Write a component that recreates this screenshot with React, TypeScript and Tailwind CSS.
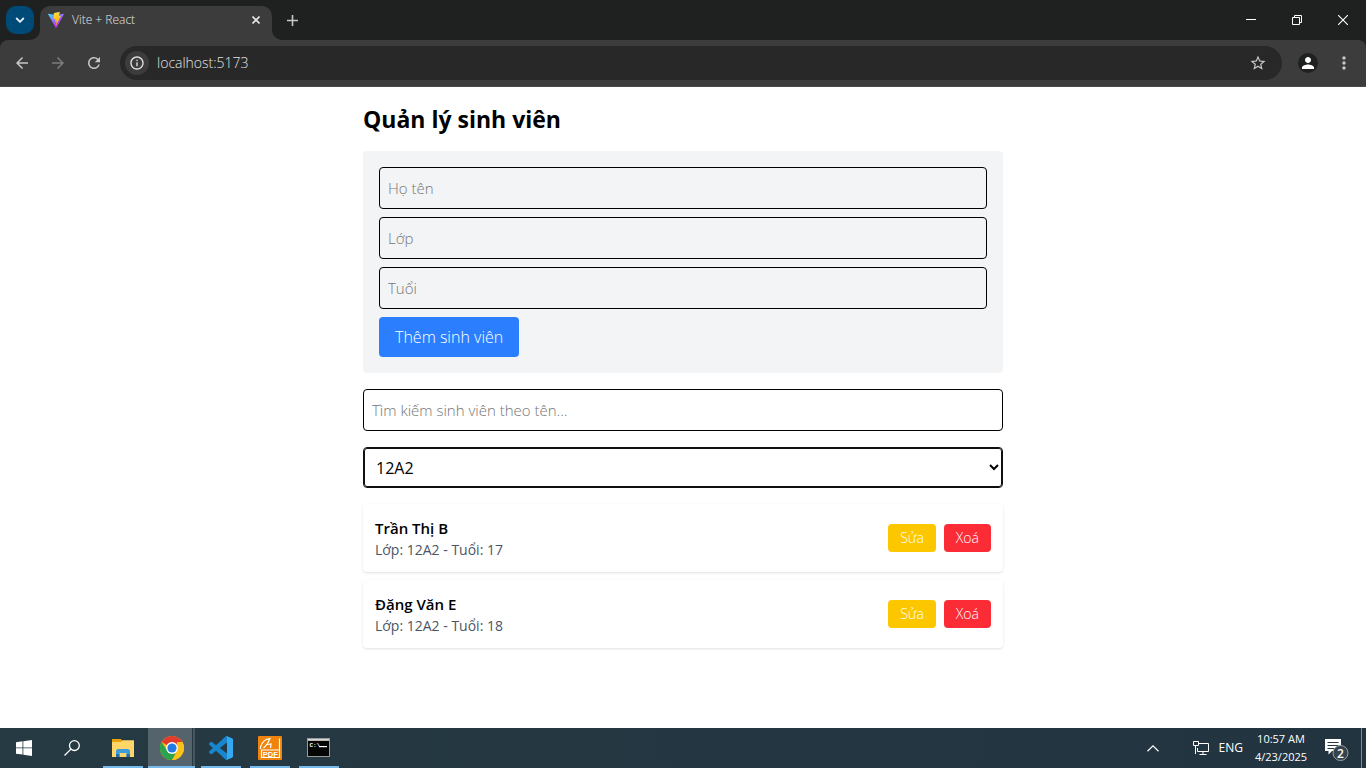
import React from "react";
import {
  MdArrowBack,
  MdArrowForward,
  MdInfoOutline,
  MdMoreVert,
  MdPerson,
  MdRefresh,
  MdStarOutline,
} from "react-icons/md";

type Student = { id: number; name: string; group: string; age: number };

const students: Student[] = [
  { id: 2, name: "Trần Thị B", group: "12A2", age: 17 },
  { id: 5, name: "Đặng Văn E", group: "12A2", age: 18 },
];

function ViteLogo() {
  return (
    <svg viewBox="0 0 256 257" className="size-4 shrink-0" aria-hidden="true">
      <defs>
        <linearGradient id="vite-a" x1="0%" x2="57.6%" y1="7.7%" y2="78.4%">
          <stop offset="0%" stopColor="#41D1FF" />
          <stop offset="100%" stopColor="#BD34FE" />
        </linearGradient>
        <linearGradient id="vite-b" x1="43.4%" x2="50.3%" y1="2.2%" y2="89%">
          <stop offset="0%" stopColor="#FFEA83" />
          <stop offset="8.3%" stopColor="#FFDD35" />
          <stop offset="100%" stopColor="#FFA800" />
        </linearGradient>
      </defs>
      <path fill="url(#vite-a)" d="M255.153 37.938L134.897 252.976c-2.483 4.44-8.862 4.466-11.382.048L.875 37.958c-2.746-4.814 1.371-10.646 6.827-9.67l120.385 21.517a6.537 6.537 0 0 0 2.322-.004l117.867-21.483c5.438-.991 9.574 4.796 6.877 9.62Z" />
      <path fill="url(#vite-b)" d="M185.432.063L96.44 17.501a3.268 3.268 0 0 0-2.634 3.014l-5.474 92.456a3.268 3.268 0 0 0 3.997 3.378l24.777-5.718c2.318-.535 4.413 1.507 3.936 3.838l-7.361 36.047c-.495 2.426 1.782 4.5 4.151 3.78l15.304-4.649c2.372-.72 4.652 1.36 4.15 3.788l-11.698 56.621c-.732 3.542 3.979 5.473 5.943 2.437l1.313-2.028l72.516-144.72c1.215-2.423-.88-5.186-3.54-4.672l-25.505 4.922c-2.396.462-4.435-1.77-3.759-4.114l16.646-57.705c.677-2.35-1.37-4.583-3.769-4.113Z" />
    </svg>
  );
}

function TabStrip() {
  return (
    <div className="flex h-10 bg-[#1f2120] text-[#e3e3e3]">
      <button aria-label="Search tabs" className="mt-1.5 ml-1.5 flex size-7 items-center justify-center rounded-[10px] bg-[#004a77]">
        <svg viewBox="0 0 10 6" className="h-[6px] w-[10px]" fill="none" stroke="#e8f2fa" strokeWidth="1.8">
          <path d="M1.2 1 5 4.8 8.8 1" />
        </svg>
      </button>
      <div className="flex items-end">
        <svg viewBox="0 0 10 10" className="-ml-1 size-[10px]" fill="#3c3c3c" aria-hidden="true">
          <path d="M10 0v10H0A10 10 0 0 0 10 0Z" />
        </svg>
      </div>
      <div className="mt-1.5 flex w-[232px] items-center gap-2 rounded-t-[10px] bg-[#3c3c3c] px-2 pb-1.5">
        <ViteLogo />
        <span className="flex-1 font-['Open_Sans','Noto_Sans',sans-serif] text-xs font-light">Vite + React</span>
        <button aria-label="Close tab" className="flex size-4 items-center justify-center">
          <svg viewBox="0 0 8 8" className="size-2" stroke="currentColor" strokeWidth="1.6">
            <path d="m.5.5 7 7M7.500.5l-7 7" />
          </svg>
        </button>
      </div>
      <div className="flex items-end">
        <svg viewBox="0 0 10 10" className="size-[10px]" fill="#3c3c3c" aria-hidden="true">
          <path d="M0 0v10h10A10 10 0 0 1 0 0Z" />
        </svg>
      </div>
      <button aria-label="New tab" className="flex w-5 items-center justify-center">
        <svg viewBox="0 0 11 11" className="size-[11px]" stroke="#c7c7c7" strokeWidth="1.6">
          <path d="M5.5 0v11M0 5.5h11" />
        </svg>
      </button>
      <div className="ml-auto flex text-white">
        <button aria-label="Minimize" className="flex w-[46px] items-center justify-center">
          <svg viewBox="0 0 10 10" className="size-[10px]" fill="none" stroke="currentColor">
            <path d="M0 4.5h10" />
          </svg>
        </button>
        <button aria-label="Restore" className="flex w-[46px] items-center justify-center">
          <svg viewBox="0 0 10 10" className="size-[10px]" fill="none" stroke="currentColor">
            <path d="M.5 2.5h7v7h-7zM2.5 2V.5h7v7H8" />
          </svg>
        </button>
        <button aria-label="Close" className="flex w-[46px] items-center justify-center">
          <svg viewBox="0 0 10 10" className="size-[10px]" fill="none" stroke="currentColor" strokeWidth="1.1">
            <path d="m0 0 10 10M10 0 0 10" />
          </svg>
        </button>
      </div>
    </div>
  );
}

function Toolbar() {
  return (
    <div className="bg-[#1f2120]">
      <div className="flex h-[47px] items-center rounded-t-lg border-b border-[#4a4a4a] bg-[#3c3c3c] text-[#c7c7c7]">
        <button aria-label="Back" className="ml-1 flex size-9 items-center justify-center">
          <MdArrowBack className="size-[18px]" />
        </button>
        <button aria-label="Forward" className="flex size-9 items-center justify-center text-[#7c7c7c]">
          <MdArrowForward className="size-[18px]" />
        </button>
        <button aria-label="Reload" className="flex size-9 items-center justify-center">
          <MdRefresh className="size-[18px]" />
        </button>
        <div className="ml-2 flex h-[34px] flex-1 items-center rounded-full bg-[#282828] pr-[14px] pl-[5px]">
          <button aria-label="View site information" className="flex size-6 items-center justify-center rounded-full bg-[#3c3c3c] text-[#e3e3e3]">
            <MdInfoOutline className="size-4" />
          </button>
          <input
            aria-label="Address"
            defaultValue="localhost:5173"
            className="ml-2 min-w-0 flex-1 bg-transparent font-['Open_Sans','Noto_Sans',sans-serif] text-sm font-light text-[#e3e3e3] outline-none"
          />
          <button aria-label="Bookmark this tab" className="flex size-5 items-center justify-center">
            <MdStarOutline className="size-[18px]" />
          </button>
        </div>
        <button aria-label="Profile" className="ml-4 flex size-5 items-center justify-center rounded-full bg-[#1f2120] text-white">
          <MdPerson className="size-[18px]" />
        </button>
        <button aria-label="Menu" className="mr-3 ml-4 flex size-5 items-center justify-center">
          <MdMoreVert className="size-5" />
        </button>
      </div>
    </div>
  );
}

function Field({ label }: { label: string }) {
  return (
    <input
      aria-label={label}
      placeholder={label}
      className="block w-full rounded border border-black p-2 text-[15px] leading-6 placeholder:text-[#757575]"
    />
  );
}

function StudentPage() {
  return (
    <main className="flex-1 bg-white font-['Open_Sans','Noto_Sans',sans-serif] text-black">
      <div className="mx-auto max-w-2xl p-4">
        <h1 className="mb-4 text-[23px] leading-8 font-bold">Quản lý sinh viên</h1>
        <form className="mb-4 space-y-2 rounded bg-gray-100 p-4 font-light" onSubmit={(e) => e.preventDefault()}>
          <Field label="Họ tên" />
          <Field label="Lớp" />
          <Field label="Tuổi" />
          <button className="block rounded bg-[#2b7fff] px-4 py-2 text-white">Thêm sinh viên</button>
        </form>
        <div className="mb-4 font-light">
          <Field label="Tìm kiếm sinh viên theo tên..." />
        </div>
        <select
          aria-label="Lớp"
          defaultValue="12A2"
          className="mb-4 block h-[41px] w-full rounded border border-[#101010] bg-white p-2 outline-1 -outline-offset-2 outline-[#101010]"
        >
          <option>12A1</option>
          <option>12A2</option>
        </select>
        <ul className="space-y-2">
          {students.map((s) => (
            <li key={s.id} className="flex items-center justify-between rounded p-3 shadow-sm">
              <div>
                <p className="text-[15px] leading-6 font-semibold">{s.name}</p>
                <p className="text-sm text-[#4a5565]">
                  Lớp: {s.group} - Tuổi: {s.age}
                </p>
              </div>
              <div className="flex gap-2 text-sm font-light text-white">
                <button className="rounded bg-[#fdc700] px-3 py-1">Sửa</button>
                <button className="rounded bg-[#fb2c36] px-3 py-1">Xoá</button>
              </div>
            </li>
          ))}
        </ul>
      </div>
    </main>
  );
}

function TaskButton({ label, children }: { label: string; children: React.ReactNode }) {
  return (
    <button aria-label={label} className="flex w-10 items-center justify-center border-b-2 border-[#76b9ed] pt-0.5">
      {children}
    </button>
  );
}

function Taskbar() {
  return (
    <footer className="flex h-10 bg-linear-to-r from-[#263a43] to-[#223440] text-white">
      <button aria-label="Start" className="flex w-12 items-center justify-center">
        <svg viewBox="0 0 16 16" className="size-4" fill="#fff">
          <path d="M0 2.2 6.5 1.3v6.2H0zM7.3 1.2 16 0v7.5H7.3zM0 8.3h6.5v6.3L0 13.7zM7.3 8.3H16V16l-8.7-1.3z" />
        </svg>
      </button>
      <button aria-label="Search" className="flex w-12 items-center justify-center">
        <svg viewBox="0 0 16 16" className="size-4" fill="none" stroke="#fff" strokeWidth="1.3">
          <circle cx="10.4" cy="5.6" r="4.9" />
          <path d="M6.9 9.1.5 15.5" />
        </svg>
      </button>
      <div className="ml-[7px] flex">
        <TaskButton label="File Explorer">
          <svg viewBox="0 0 22 18" className="h-[18px] w-[22px]">
            <path fill="#e8a30c" d="M0 0h9l1 2v3H0z" />
            <path fill="#ffd667" d="M0 3h9l1-1.7h12V18H0z" />
            <path fill="#3e9bdc" d="M4 18v-6.5L5.5 10h11l1.5 1.5V18h-3.5v-4h-7v4z" />
            <path fill="#2472b2" d="M4 15h3.5v3H4zM14.5 15H18v3h-3.5z" />
          </svg>
        </TaskButton>
      </div>
      <button aria-label="Google Chrome" className="ml-[5px] flex w-[47px] border-b-2 border-[#76b9ed] bg-[#55646c]">
        <span className="flex flex-1 items-center justify-center self-stretch pt-0.5 pl-1">
          <svg viewBox="0 0 24 24" className="size-6">
            <circle cx="12" cy="12" r="12" fill="#fbc116" />
            <path fill="#e33b2e" d="M12 12 1.6 6A12 12 0 0 1 22.4 6z" />
            <path fill="#2ba24c" d="M12 24A12 12 0 0 1 1.6 6L7.2 14.8 12 17.5h4.8z" />
            <path fill="#fbc116" d="M12 24 17 14.7V6h5.4A12 12 0 0 1 12 24z" />
            <circle cx="12" cy="12" r="5.9" fill="#fff" />
            <circle cx="12" cy="12" r="4.6" fill="#2479e8" />
          </svg>
        </span>
        <span className="w-[3px] self-stretch border-l border-[#273840] bg-[#47565f]" />
      </button>
      <div className="ml-[6px] flex gap-[9px]">
        <TaskButton label="Visual Studio Code">
          <svg viewBox="0 0 24 24" className="size-6">
            <path fill="#1687cf" d="M23.15 2.587L18.21.21a1.494 1.494 0 0 0-1.705.29l-9.46 8.63-4.12-3.128a.999.999 0 0 0-1.276.057L.327 7.261A1 1 0 0 0 .326 8.74L3.899 12 .326 15.26a1 1 0 0 0 .001 1.479L1.65 17.94a.999.999 0 0 0 1.276.057l4.12-3.128 9.46 8.63a1.492 1.492 0 0 0 1.704.29l4.942-2.377A1.5 1.5 0 0 0 24 20.06V3.939a1.5 1.5 0 0 0-.85-1.352zm-5.146 14.861L10.826 12l7.178-5.448v10.896z" />
            <path fill="#35a8f2" d="M18 .2 23.15 2.6A1.5 1.5 0 0 1 24 4v16a1.5 1.5 0 0 1-.85 1.4L18 23.8z" />
          </svg>
        </TaskButton>
        <TaskButton label="PDF Reader">
          <svg viewBox="0 0 24 24" className="size-6">
            <rect width="24" height="24" rx="1" fill="#f0830a" />
            <path d="M2.5 13V11C4 6.500 7 3 12 2.500L9 8.500 5.500 12M9 8.500l4-.5-.5 4M21.500 2.500v19H3.500V14h18" fill="none" stroke="#fff" strokeWidth="1.2" />
            <text x="12.300" y="20.700" textAnchor="middle" fontFamily="Liberation Sans" fontSize="7.500" fontWeight="bold" fill="#fff">PDF</text>
          </svg>
        </TaskButton>
        <TaskButton label="Command Prompt">
          <svg viewBox="0 0 24 20" className="h-5 w-6">
            <rect width="23" height="19" fill="#9a9a9a" />
            <rect x="1" y="3" width="21" height="15" fill="#050505" />
            <path fill="#d8d8d8" d="M1 1h21v1.5H1z" />
            <path fill="#fff" d="M12 8h8v1.2h-8z" />
            <text x="2.5" y="9" fontFamily="Liberation Mono" fontSize="6" fontWeight="bold" fill="#fff">C:\</text>
          </svg>
        </TaskButton>
      </div>
      <div className="ml-auto flex items-center font-['Open_Sans','Noto_Sans',sans-serif] text-xs">
        <button aria-label="Show hidden icons" className="mr-[34px] flex items-center">
          <svg viewBox="0 0 12 7" className="h-[7px] w-3" fill="none" stroke="#fff" strokeWidth="1.2">
            <path d="M.5 6.3 6 .9l5.5 5.4" />
          </svg>
        </button>
        <svg viewBox="0 0 16 14" className="mr-[10px] h-[14px] w-4" fill="none" stroke="#fff" aria-label="Network">
          <path d="M6 2.5h9.5v8H4.5V7M10 10.5v3M6.5 13.5h7M.5.5h5v4h-5zM2.5 4.5V13" />
        </svg>
        <span className="mr-3">ENG</span>
        <div className="w-[52px] text-[11px] leading-[18px] whitespace-nowrap">
          <div className="flex justify-center">10:57 AM</div>
          <div className="flex justify-center">4/23/2025</div>
        </div>
        <button aria-label="Notifications" className="mr-3 ml-[17px] flex">
          <svg viewBox="0 0 25 26" className="h-[26px] w-[25px]">
            <path fill="#fff" d="M1 4h16v12H8l-3.5 3.5V16H1z" />
            <path stroke="#263a43" d="M3.5 7.5h11M3.5 10.5h11M3.5 13.5h7" />
            <circle cx="16.5" cy="18" r="7.5" fill="#36434b" stroke="#9aa1a6" />
            <text x="16.5" y="22.5" textAnchor="middle" fontFamily="Open Sans" fontSize="12" fontWeight="600" fill="#fff">2</text>
          </svg>
        </button>
        <span className="mr-1 h-10 w-px bg-[#7b8790]" />
      </div>
    </footer>
  );
}

export default function App() {
  return (
    <div className="flex min-h-screen flex-col">
      <TabStrip />
      <Toolbar />
      <StudentPage />
      <Taskbar />
    </div>
  );
}
